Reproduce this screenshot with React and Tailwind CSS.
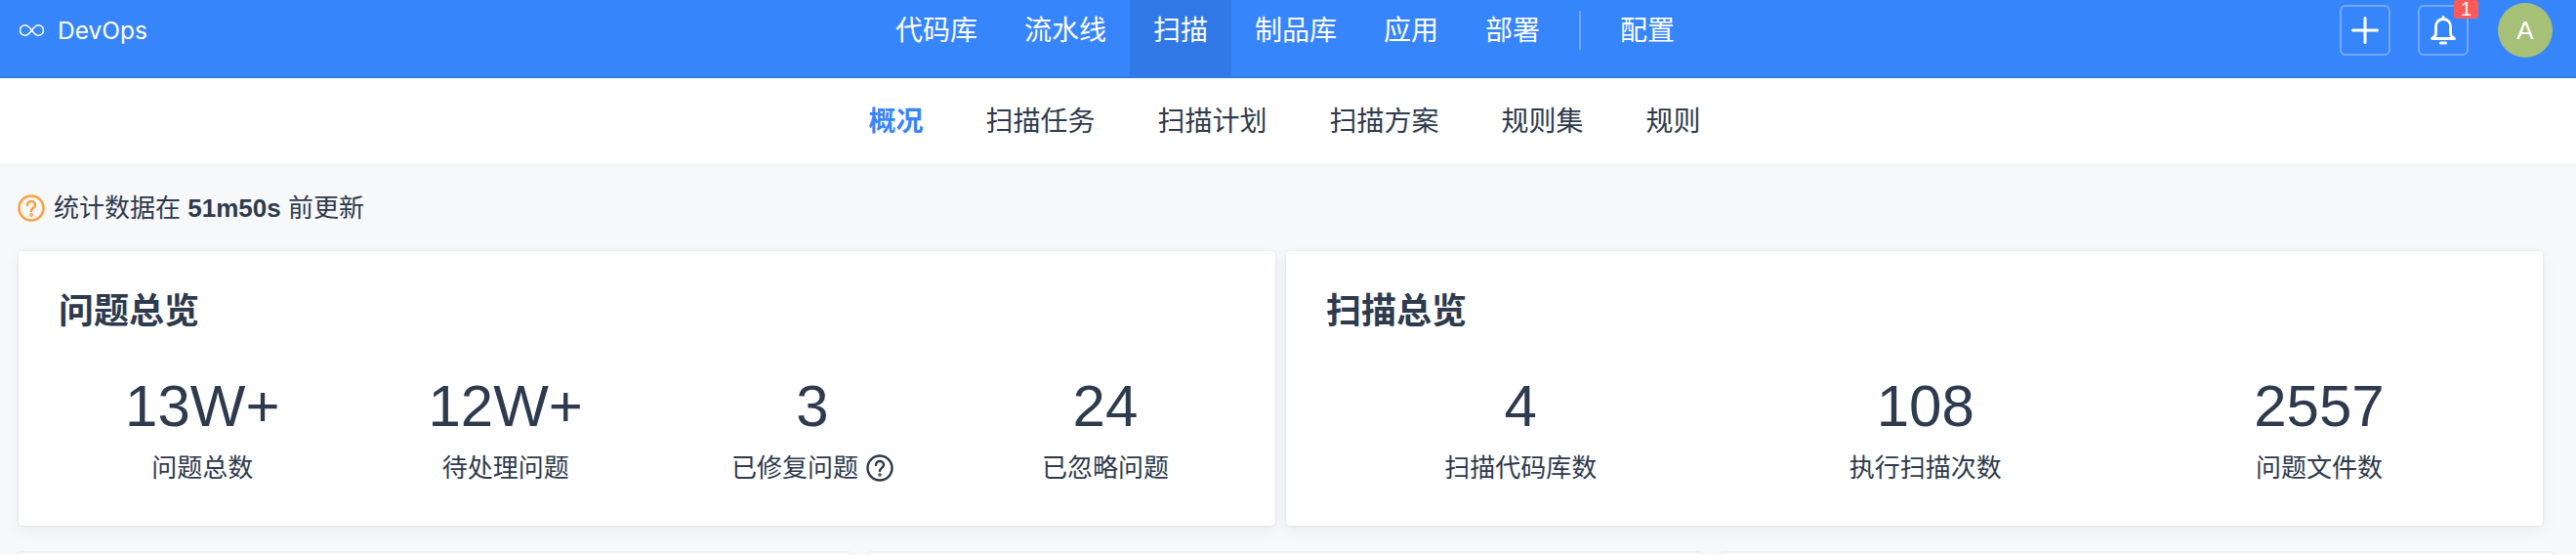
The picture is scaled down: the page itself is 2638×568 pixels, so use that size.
import React from 'react';

const TOP_NAV = ['代码库', '流水线', '扫描', '制品库', '应用', '部署'];
const SUB_NAV = ['概况', '扫描任务', '扫描计划', '扫描方案', '规则集', '规则'];

const ISSUE_STATS = [
  { value: '13W+', label: '问题总数' },
  { value: '12W+', label: '待处理问题' },
  { value: '3', label: '已修复问题', hint: true },
  { value: '24', label: '已忽略问题' },
];

const SCAN_STATS = [
  { value: '4', label: '扫描代码库数' },
  { value: '108', label: '执行扫描次数' },
  { value: '2557', label: '问题文件数' },
];

const HelpIcon = ({ className, strokeWidth = 2.4 }) => (
  <svg viewBox="0 0 28 28" fill="none" stroke="currentColor" strokeWidth={strokeWidth} strokeLinecap="round" className={className}>
    <circle cx="14" cy="14" r="12.5" />
    <path d="M10 11c0-2.500 1.800-4 4-4s4 1.500 4 3.700c0 3-4 3.300-4 6.300" />
    <circle cx="14" cy="21" r="0.6" fill="currentColor" />
  </svg>
);

const Stat = ({ value, label, hint }) => (
  <div className="flex flex-col items-center">
    <div className="text-[60px] leading-[68px] font-normal">{value}</div>
    <div className="mt-[11px] flex items-center text-[26px] leading-[36px]">
      {label}
      {hint && <HelpIcon className="ml-[8px] w-[28px] h-[28px]" />}
    </div>
  </div>
);

const OverviewCard = ({ title, stats }) => (
  <div className="w-[1287px] h-[281px] bg-white rounded-[4px] shadow-[0_0_3px_rgba(40,50,80,0.12),0_6px_16px_rgba(40,50,80,0.05)]">
    <h2 className="pl-[41px] pt-[39px] text-[36px] leading-[46px] font-semibold">{title}</h2>
    <div className="mt-[40px] px-[33px] flex justify-around">
      {stats.map((s) => (
        <Stat key={s.label} {...s} />
      ))}
    </div>
  </div>
);

const App = () => {
  return (
    <div className="h-[568px] overflow-hidden bg-[#f7f8fa] text-[#2e3a4d] font-['Liberation_Sans','Noto_Sans_CJK_SC',sans-serif]">
      {/* Top bar */}
      <header className="relative h-[80px] pr-[6px] bg-[#3785fb] border-b-2 border-[#3079ea] text-white flex justify-center">
        <div className="absolute left-[20px] top-0 h-[62px] flex items-center">
          <svg viewBox="0 0 26 14" fill="none" stroke="currentColor" strokeWidth="1.600" className="w-[25px] h-[14px]">
            <path d="M13 7C10.500 3.500 8.500 1.500 6 1.500a5.500 5.500 0 0 0 0 11c2.500 0 4.500-2 7-5.500s4.500-5.500 7-5.500a5.500 5.500 0 0 1 0 11c-2.500 0-4.500-2-7-5.500z" />
          </svg>
          <span className="ml-[14px] text-[24.500px] font-['Inter',sans-serif]">DevOps</span>
        </div>

        <nav className="flex text-[28px]">
          {TOP_NAV.map((item) => (
            <div key={item} className={`px-[24px] pt-[13px] leading-[38px] ${item === '扫描' ? 'bg-[#3079e6]' : ''}`}>
              {item}
            </div>
          ))}
          <div className="mx-[16px] mt-[11px] w-[2px] h-[40px] bg-white/30" />
          <div className="px-[24px] pt-[13px] leading-[38px]">配置</div>
        </nav>

        <div className="absolute right-[24px] top-0 flex">
          <button className="mt-[5px] w-[52px] h-[52px] rounded-[6px] border-2 border-white/30 flex items-center justify-center">
            <svg viewBox="0 0 28 28" fill="none" stroke="currentColor" strokeWidth="3" strokeLinecap="round" className="w-[28px] h-[28px]">
              <path d="M14 1.500v25M1.500 14h25" />
            </svg>
          </button>
          <button className="relative ml-[28px] mt-[5px] w-[52px] h-[52px] rounded-[6px] border-2 border-white/30 flex items-center justify-center">
            <svg viewBox="0 0 26 30" fill="none" stroke="currentColor" strokeWidth="2.800" strokeLinejoin="round" strokeLinecap="round" className="w-[26px] h-[30px]">
              <path d="M13 3.500c-5 0-7.500 3.500-7.500 8v7c0 2-1.500 3.500-4 5h23c-2.500-1.500-4-3-4-5v-7c0-4.500-2.500-8-7.500-8z" />
              <path d="M13 1.500v2" />
              <path d="M10.500 28h5" strokeWidth="3" />
            </svg>
            <span className="absolute left-[35px] -top-[7px] w-[25px] h-[19px] rounded-[3px] bg-[#ff5a5a] text-[20px] leading-[19px] text-center">1</span>
          </button>
          <div className="ml-[30px] mt-[3px] w-[56px] h-[56px] rounded-full bg-[#a6c077] flex items-center justify-center text-[26px]">A</div>
        </div>
      </header>

      {/* Sub navigation */}
      <nav className="h-[88px] pr-[7px] pt-[2px] bg-white flex justify-center items-center gap-[64px] text-[28px] shadow-[0_1px_3px_rgba(30,40,60,0.06)]">
        {SUB_NAV.map((item, i) => (
          <div key={item} className={i === 0 ? 'text-[#3785fb] font-semibold' : ''}>
            {item}
          </div>
        ))}
      </nav>

      {/* Freshness note */}
      <div className="mt-[27px] ml-[18px] flex items-center h-[36px] text-[26px]">
        <HelpIcon className="w-[28px] h-[28px] text-[#ff9f43]" strokeWidth={2.6} />
        <span className="ml-[9px]">
          统计数据在 <b className="font-bold">51m50s</b> 前更新
        </span>
      </div>

      {/* Overview cards */}
      <div className="mt-[26px] pl-[19px] flex gap-[11px]">
        <OverviewCard title="问题总览" stats={ISSUE_STATS} />
        <OverviewCard title="扫描总览" stats={SCAN_STATS} />
      </div>

      {/* Next row, cut off by the window */}
      <div className="mt-[26px] pl-[17px] flex gap-[17px]">
        {[0, 1, 2].map((i) => (
          <div key={i} className="w-[855px] h-[200px] bg-white rounded-[4px] border-2 border-[#eef0f3]" />
        ))}
      </div>
    </div>
  );
};

export default App;
